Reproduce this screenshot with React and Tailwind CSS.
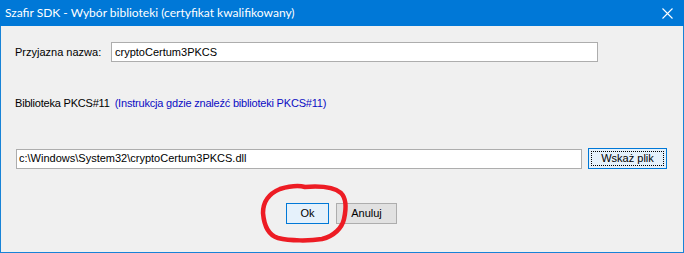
export default function App() {
  return (
    <div
      className="relative w-[684px] h-[253px] flex flex-col bg-[#f0f0f0] border border-t-0 border-[#1883d7] text-[11px] text-black"
      style={{ fontFamily: '"Liberation Sans", Arial, sans-serif' }}
    >
      {/* title bar */}
      <div className="h-[26px] -mx-px bg-[#0078d7] flex items-center justify-between pl-[5px] pr-[11px]">
        <span className="text-white text-[12px]" style={{ fontFamily: 'Lato, "Noto Sans", sans-serif' }}>
          Szafir SDK - Wybór biblioteki (certyfikat kwalifikowany)
        </span>
        <svg width="11" height="11" viewBox="0 0 11 11">
          <path d="M0.5 0.5 L10.5 10.5 M10.5 0.5 L0.5 10.5" stroke="white" strokeWidth="1.1" fill="none" />
        </svg>
      </div>

      {/* friendly name */}
      <div className="flex items-center mt-[16px] pl-[14px] h-[20px]">
        <span className="w-[96px]">Przyjazna nazwa:</span>
        <div className="w-[487px] h-[20px] bg-white border border-[#adadad] flex items-center pl-[3px]">
          cryptoCertum3PKCS
        </div>
      </div>

      {/* library label + link */}
      <div className="flex items-center mt-[34px] pl-[14px] h-[14px]">
        <span className="tracking-[-0.2px]">Biblioteka PKCS#11</span>
        <span className="ml-[5px] tracking-[-0.2px] text-[#0c0cc4]">(Instrukcja gdzie znaleźć biblioteki PKCS#11)</span>
      </div>

      {/* path row */}
      <div className="flex items-center mt-[38px] pl-[15px] gap-[6px]">
        <div className="w-[566px] h-[20px] bg-white border border-[#adadad] flex items-center pl-[2px]">
          c:\Windows\System32\cryptoCertum3PKCS.dll
        </div>
        <button className="w-[79px] h-[21px] border border-[#0078d7] bg-[#e5f1fb] p-[2px]">
          <span className="w-full h-full flex items-center justify-center border border-dotted border-black">
            Wskaż plik
          </span>
        </button>
      </div>

      {/* buttons */}
      <div className="flex mt-[34px] pl-[285px] gap-[7px]">
        <button className="w-[43px] h-[21px] border border-[#0078d7] bg-[#e5f1fb] flex items-center justify-center">
          Ok
        </button>
        <button className="w-[61px] h-[21px] border border-[#adadad] bg-[#e1e1e1] flex items-center justify-center">
          Anuluj
        </button>
      </div>

      {/* hand drawn annotation */}
      <svg className="absolute left-[-1px] top-0 pointer-events-none" width="684" height="253" viewBox="0 0 684 253">
        <path
          d="M305 187 C318 186 334 187 341 193 C347 199 346 210 344 219 C342 228 334 236 322 239 C310 241 290 241 278 238 C268 235 264 225 263 213 C263 203 268 194 280 189 C290 186 298 185 305 187 Z"
          fill="none"
          stroke="#ed1c24"
          strokeWidth="4.5"
          strokeLinejoin="round"
        />
      </svg>
    </div>
  );
}
